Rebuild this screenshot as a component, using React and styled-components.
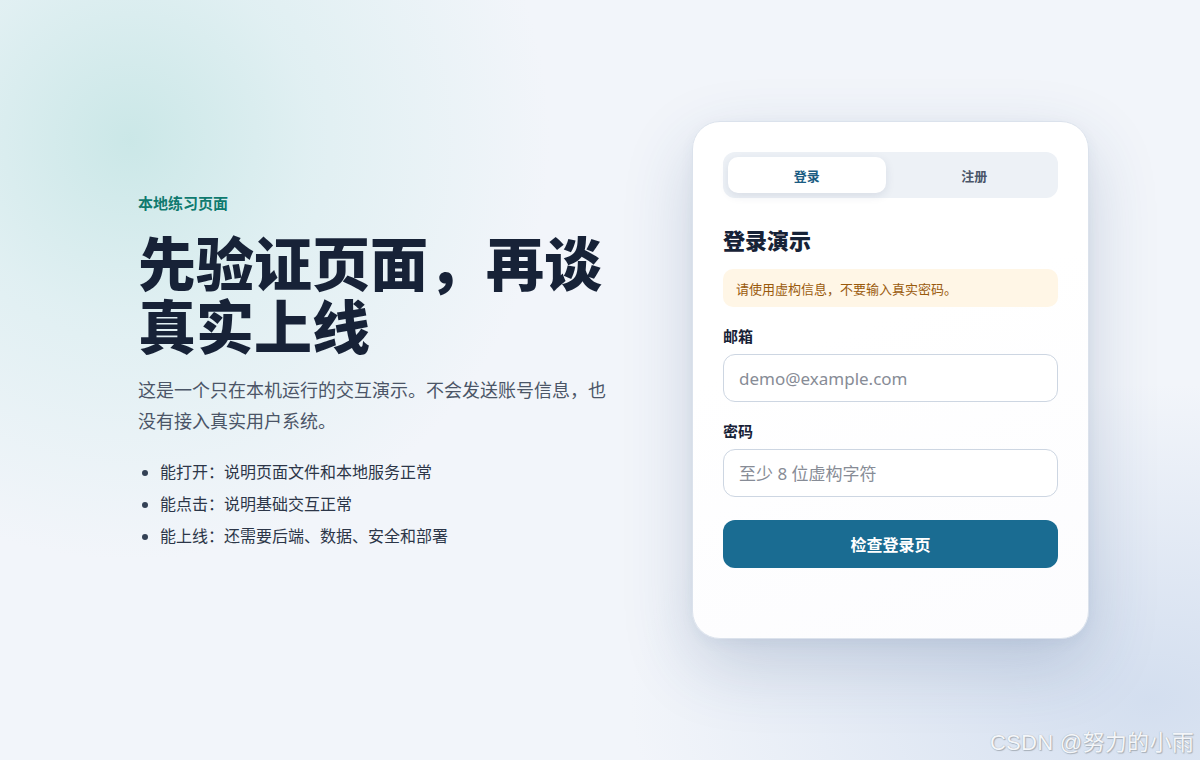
import React, { useState } from "react";
import styled, { createGlobalStyle } from "styled-components";

const Global = createGlobalStyle`
  html, body { margin: 0; padding: 0; }
  body {
    font-family: "Noto Sans", "Noto Sans CJK SC", sans-serif;
    background: #f2f5fa;
  }
  * { box-sizing: border-box; }
`;

const Page = styled.main`
  position: relative;
  width: 1200px;
  height: 760px;
  overflow: hidden;
  display: grid;
  grid-template-columns: 480px 397px;
  column-gap: 74px;
  align-items: center;
  padding: 0 111px 0 138px;
  background:
    radial-gradient(circle at 130px 140px, rgba(196, 229, 228, 0.85) 0, rgba(210, 235, 236, 0.55) 180px, rgba(242, 245, 250, 0) 420px),
    radial-gradient(ellipse at 1150px 700px, rgba(208, 220, 238, 0.9) 0, rgba(242, 245, 250, 0) 520px),
    #f2f5fa;
`;

const Intro = styled.section`
  align-self: start;
  margin-top: 192px;
  display: flex;
  flex-direction: column;
`;

const Eyebrow = styled.p`
  margin: 0 0 18px;
  font-size: 15px;
  font-weight: 700;
  color: #0f7a6f;
  line-height: 22px;
`;

const Headline = styled.h1`
  margin: 0;
  font-size: 58px;
  line-height: 63px;
  font-weight: 900;
  color: #172237;
`;

const Lead = styled.p`
  margin: 17px 0 0;
  font-size: 18px;
  line-height: 31px;
  color: #4b5567;
  width: 472px;
`;

const Points = styled.ul`
  margin: 23px 0 0;
  padding: 0 0 0 22px;
  display: flex;
  flex-direction: column;
  gap: 8px;
`;

const Point = styled.li`
  font-size: 16px;
  line-height: 24px;
  color: #2c3648;
  &::marker { color: #334155; }
`;

const Card = styled.section`
  width: 397px;
  height: 518px;
  padding: 30px 30px;
  border-radius: 28px;
  border: 1px solid #dbe2ec;
  background: linear-gradient(160deg, #ffffff 40%, #fcfcfe 100%);
  box-shadow: 0 26px 70px rgba(40, 70, 120, 0.2), 0 4px 14px rgba(40, 70, 120, 0.05);
  display: flex;
  flex-direction: column;
`;

const Tabs = styled.div`
  display: grid;
  grid-template-columns: 1fr 1fr;
  gap: 10px;
  padding: 5px;
  height: 46px;
  border-radius: 12px;
  background: #edf1f6;
`;

const Tab = styled.button`
  border: 0;
  border-radius: 10px;
  font-family: inherit;
  font-size: 13px;
  font-weight: 700;
  cursor: pointer;
  background: ${(p) => (p.$active ? "#ffffff" : "transparent")};
  color: ${(p) => (p.$active ? "#1b5d83" : "#4a5568")};
  box-shadow: ${(p) => (p.$active ? "0 3px 10px rgba(30, 50, 90, 0.1)" : "none")};
`;

const Title = styled.h2`
  margin: 27px 0 0;
  font-size: 22px;
  line-height: 30px;
  font-weight: 800;
  color: #172237;
`;

const Notice = styled.div`
  margin-top: 14px;
  height: 38px;
  display: flex;
  align-items: center;
  padding: 0 13px;
  border-radius: 10px;
  background: #fff6e6;
  color: #9a5a0c;
  font-size: 13px;
`;

const Field = styled.label`
  display: flex;
  flex-direction: column;
  gap: 7px;
  margin-top: ${(p) => p.$top}px;
`;

const Label = styled.span`
  font-size: 15px;
  line-height: 22px;
  font-weight: 700;
  color: #172237;
`;

const Input = styled.input`
  height: 48px;
  width: 100%;
  padding: 0 15px;
  border: 1px solid #cdd6e2;
  border-radius: 12px;
  background: #ffffff;
  font-family: inherit;
  font-size: 17px;
  color: #1f2937;
  outline: none;
  &::placeholder { color: #878c96; }
`;

const Submit = styled.button`
  margin-top: 23px;
  height: 48px;
  border: 0;
  border-radius: 12px;
  background: #1a6c92;
  color: #ffffff;
  font-family: inherit;
  font-size: 16px;
  font-weight: 700;
  cursor: pointer;
`;

const Watermark = styled.div`
  position: absolute;
  right: 6px;
  bottom: 4px;
  font-family: "Liberation Sans", "Noto Sans CJK SC", sans-serif;
  font-size: 22px;
  color: #f4f6f9;
  text-shadow: 0 0 1px #9aa3ad, 1px 1px 1px #a9b1ba;
  letter-spacing: 0.3px;
`;

export default function App() {
  const [tab, setTab] = useState("login");
  return (
    <>
      <Global />
      <Page>
        <Intro>
          <Eyebrow>本地练习页面</Eyebrow>
          <Headline>
            先验证页面，再谈
            <br />
            真实上线
          </Headline>
          <Lead>这是一个只在本机运行的交互演示。不会发送账号信息，也没有接入真实用户系统。</Lead>
          <Points>
            <Point>能打开：说明页面文件和本地服务正常</Point>
            <Point>能点击：说明基础交互正常</Point>
            <Point>能上线：还需要后端、数据、安全和部署</Point>
          </Points>
        </Intro>
        <Card>
          <Tabs>
            <Tab $active={tab === "login"} onClick={() => setTab("login")}>登录</Tab>
            <Tab $active={tab === "register"} onClick={() => setTab("register")}>注册</Tab>
          </Tabs>
          <Title>登录演示</Title>
          <Notice>请使用虚构信息，不要输入真实密码。</Notice>
          <Field $top={18}>
            <Label>邮箱</Label>
            <Input type="email" placeholder="demo@example.com" />
          </Field>
          <Field $top={18}>
            <Label>密码</Label>
            <Input type="password" placeholder="至少 8 位虚构字符" />
          </Field>
          <Submit type="button">检查登录页</Submit>
        </Card>
        <Watermark>CSDN @努力的小雨</Watermark>
      </Page>
    </>
  );
}
